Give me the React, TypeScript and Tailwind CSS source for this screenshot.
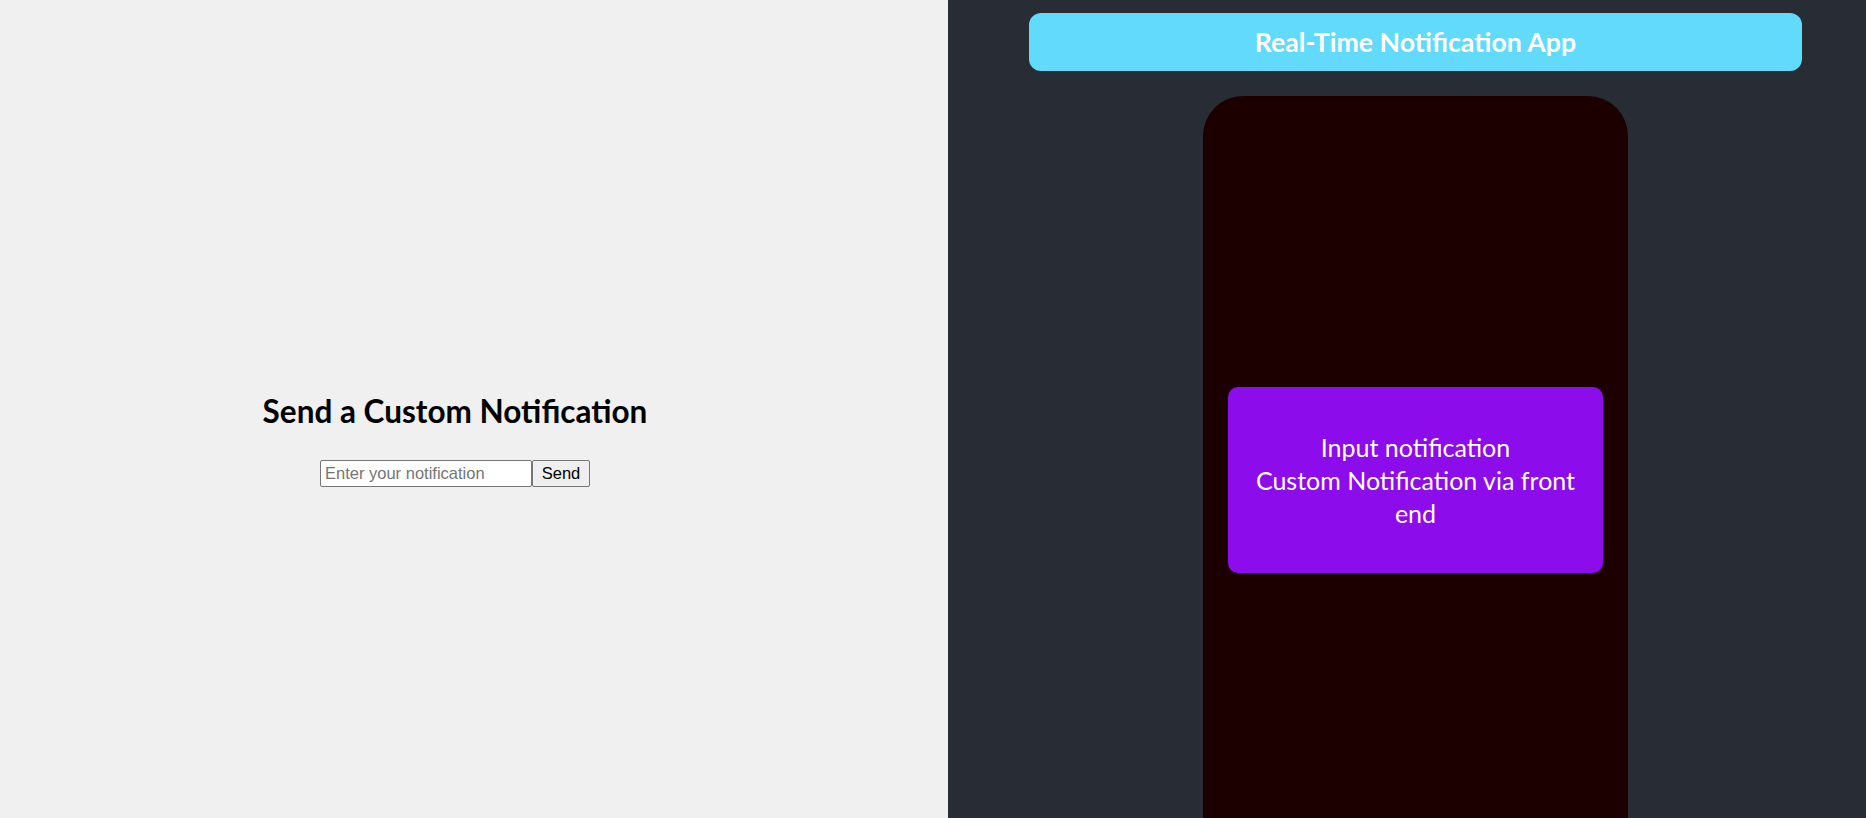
import React, { useState } from "react";

const uiFont = { fontFamily: 'Lato, "Open Sans", sans-serif' };

const App: React.FC = () => {
  const [message, setMessage] = useState<string>("");
  const [notification, setNotification] = useState<string>(
    "Custom Notification via front end"
  );

  // Send the typed message to the preview phone
  const handleSend = () => {
    if (!message.trim()) return;
    setNotification(message);
    setMessage("");
  };

  return (
    <div className="flex h-[818px] w-full overflow-hidden">
      {/* Sender panel */}
      <div className="flex w-[948px] shrink-0 flex-col items-center justify-center bg-[#f0f0f0] pt-[60px] pr-[38px]">
        <h2
          className="m-0 text-[31.5px] leading-[40px] font-bold text-black"
          style={uiFont}
        >
          Send a Custom Notification
        </h2>
        <div className="mt-[29px] flex">
          <input
            type="text"
            value={message}
            onChange={(e) => setMessage(e.target.value)}
            placeholder="Enter your notification"
            className="h-[27px] w-[212px] rounded-[2px] border border-[#767676] bg-white px-[4px] font-['Liberation_Sans',Arial,sans-serif] text-[16.5px] text-black outline-none placeholder:text-[#757575]"
          />
          <button
            onClick={handleSend}
            className="h-[27px] w-[58px] rounded-[2px] border border-[#767676] bg-[#efefef] font-['Liberation_Sans',Arial,sans-serif] text-[16.5px] text-black"
          >
            Send
          </button>
        </div>
      </div>

      {/* Preview panel */}
      <div className="flex flex-1 flex-col items-center bg-[#282c34] pt-[13px] pr-[64px] pl-[81px]">
        <div className="flex h-[58px] w-full shrink-0 items-center justify-center rounded-[12px] bg-[#61dafb]">
          <h1
            className="m-0 text-[26.7px] leading-[34px] font-bold text-white"
            style={uiFont}
          >
            Real-Time Notification App
          </h1>
        </div>

        <div className="mt-[25px] flex h-[768px] w-[425px] shrink-0 items-center justify-center rounded-[40px] bg-[#1c0000] px-[25px]">
          <div
            className="flex h-[186px] w-full items-center justify-center rounded-[10px] bg-[#8d0ceb] px-[20px] text-center text-[25px] leading-[33px] text-white"
            style={uiFont}
          >
            <p className="m-0">
              Input notification
              <br /> {notification}
            </p>
          </div>
        </div>
      </div>
    </div>
  );
};

export default App;
